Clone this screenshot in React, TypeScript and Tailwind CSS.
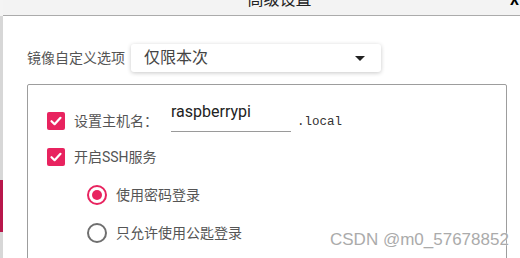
import React from "react";

const font = { fontFamily: '"Roboto","Noto Sans CJK SC",sans-serif' };

function Check() {
  return (
    <div className="w-[18px] h-[18px] rounded-[2px] bg-[#e8235f] flex items-center justify-center shrink-0">
      <svg width="14" height="14" viewBox="0 0 14 14">
        <path d="M2.5 7.2 L5.6 10.2 L11.5 3.8" fill="none" stroke="white" strokeWidth="2.2" strokeLinecap="round" strokeLinejoin="round" />
      </svg>
    </div>
  );
}

function Radio({ on }: { on: boolean }) {
  return (
    <div
      className={
        "w-[20px] h-[20px] rounded-full border-2 flex items-center justify-center shrink-0 " +
        (on ? "border-[#e8235f]" : "border-[#6f6f6f]")
      }
    >
      {on && <div className="w-[10px] h-[10px] rounded-full bg-[#e8235f]" />}
    </div>
  );
}

export default function App() {
  return (
    <div className="relative flex w-[520px] h-[258px] overflow-hidden bg-white" style={font}>
      <div className="w-[3px] flex flex-col shrink-0">
        <div className="h-[16px] bg-[#f4f4f4]" />
        <div className="h-[164px] bg-[#d7d7d7]" />
        <div className="h-[52px] bg-[#b8174b]" />
        <div className="flex-1 bg-[#d7d7d7]" />
      </div>
      <div className="flex-1 flex flex-col">
        <div className="h-[16px] bg-[#f3f3f3] border-b border-[#ababab] flex items-end shrink-0">
          <div className="flex-1 text-center pl-[46px] text-[16px] leading-[20px] mb-[5px] text-[#222]">高级设置</div>
          <div className="w-[10px] text-[14px] font-bold leading-[20px] mb-[5px] text-black">X</div>
        </div>
        <div className="pl-[24px] pt-[28px] flex flex-col">
          <div className="flex items-center h-[28px]">
            <div className="text-[14px] text-[#555] w-[104px]">镜像自定义选项</div>
            <div className="w-[250px] h-[28px] bg-white rounded-[3px] shadow-[0_1px_4px_rgba(0,0,0,0.22)] flex items-center pl-[13px] pr-[16px]">
              <div className="flex-1 text-[16px] text-[#444]">仅限本次</div>
              <svg width="10" height="5" viewBox="0 0 10 5">
                <path d="M0 0 L10 0 L5 5 Z" fill="#222" />
              </svg>
            </div>
          </div>
          <div className="mt-[12px] w-[480px] h-[200px] border border-[#9d9d9d] rounded-[2px] pl-[19px] pt-[18px] flex flex-col">
            <div className="flex items-center h-[36px]">
              <Check />
              <div className="ml-[9px] w-[97px] text-[14px] text-[#555]">设置主机名：</div>
              <div className="w-[120px] h-[30px] self-start border-b border-[#9a9a9a] text-[16px] leading-[20px] text-[#222] -mt-[1px]">
                raspberrypi
              </div>
              <div className="ml-[6px] mt-[3px] text-[12.5px] text-[#333]" style={{ fontFamily: '"Liberation Mono",monospace' }}>
                .local
              </div>
            </div>
            <div className="flex items-center h-[36px]">
              <Check />
              <div className="ml-[9px] text-[14px] text-[#555]">开启SSH服务</div>
            </div>
            <div className="flex items-center h-[38px] mt-[1px] pl-[40px]">
              <Radio on={true} />
              <div className="ml-[9px] text-[14px] text-[#555]">使用密码登录</div>
            </div>
            <div className="flex items-center h-[38px] pl-[40px]">
              <Radio on={false} />
              <div className="ml-[9px] text-[14px] text-[#555]">只允许使用公匙登录</div>
            </div>
          </div>
        </div>
      </div>
      <div
        className="absolute left-[330px] top-[229px] text-[17px] text-[#ababab] leading-[22px]"
        style={{ fontFamily: '"Liberation Sans",sans-serif', textShadow: "0 0 2px #fff" }}
      >
        CSDN @m0_57678852
      </div>
    </div>
  );
}
